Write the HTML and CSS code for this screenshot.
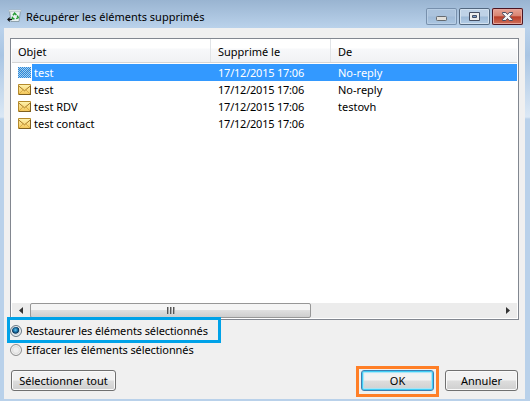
FILE: index.html
```
<!DOCTYPE html>
<html lang="fr">
<head>
<meta charset="utf-8">
<title>Récupérer les éléments supprimés</title>
<link rel="stylesheet" href="styles.css">
</head>
<body>
<svg class="defs" width="0" height="0" aria-hidden="true">
  <defs>
    <linearGradient id="paper" x2="0" y2="1"><stop stop-color="#fff4b0"/><stop offset="1" stop-color="#f3c557"/></linearGradient>
    <pattern id="dither" width="2" height="2" patternUnits="userSpaceOnUse"><path fill="#2a86dd" d="M0 0h1v1H0zM1 1h1v1H1z"/></pattern>
    <symbol id="mail" viewBox="0 0 13 11">
      <path fill="url(#paper)" stroke="#b58a2c" d="M.5.5h12v10H.5z"/>
      <path fill="none" stroke="#a87a25" d="M1 2.2l5.5 4.6L12 2.2"/>
      <path fill="none" stroke="#d3a23e" stroke-width=".8" d="M1 10l4-4M12 10L8 6"/>
      <path fill="none" stroke="#80601f" d="M1 10.500h12M12.500 2v9"/>
    </symbol>
  </defs>
</svg>
<div class="window">
  <header class="titlebar">
    <svg class="bin" width="15" height="14" viewBox="0 0 15 14">
      <path fill="#e9f1f3" stroke="#7e929c" stroke-width=".8" d="M2.500 1.500h11L12 12.500H4z"/>
      <path fill="#fff" stroke="#a9b7be" stroke-width=".7" d="M2 1h12v1.600H2z"/>
      <path fill="none" stroke="#249a30" stroke-width="1.500" d="M6 6.200l1.600-2 1.800 1.800M10.300 6.500l.9 2.200-2 .9M7.500 9.700H5.200l.5-2"/>
      <path fill="none" stroke="#111" stroke-width="1.200" d="M5 10.500H1M2.800 8.600L.9 10.500l1.900 1.900"/>
    </svg>
    <h1 class="title">Récupérer les éléments supprimés</h1>
    <div class="controls">
      <span class="control faded"><svg width="31" height="17"><rect x="10.5" y="8.5" width="10" height="4" rx=".8" fill="#e2e0db" stroke="#646a70"/></svg></span>
      <span class="control"><svg width="31" height="17"><path fill="#eee" fill-rule="evenodd" stroke="#454d61" d="M10.500 4.500h10v8h-10zM13.500 7.500v2h4v-2z"/><path fill="#7c9fcf" d="M14 8h3v1h-3z"/></svg></span>
      <span class="control close"><svg width="31" height="17"><path fill="#f4f2f2" stroke="#484c60" d="M10.500 4.500h3.300l1.700 2 1.700-2h3.300v1.200l-2.700 2.800 2.700 2.800v1.200h-3.300l-1.700-2-1.700 2h-3.300v-1.200l2.700-2.800-2.700-2.800z"/></svg></span>
    </div>
  </header>
  <main class="client">
    <section class="list">
      <div class="row head"><span class="cell first">Objet</span><span class="cell date">Supprimé le</span><span class="cell from">De</span></div>
      <div class="row selected"><svg width="13" height="11"><rect width="13" height="11" fill="#a8d3ee"/><path fill="none" stroke="#8fb9cc" d="M1 2.200l5.500 4.600L12 2.200"/><rect width="13" height="11" fill="url(#dither)"/></svg><span class="name">test</span><span class="when">17/12/2015 17:06</span><span class="who">No-reply</span></div>
      <div class="row"><svg width="13" height="11"><use href="#mail"/></svg><span class="name">test</span><span class="when">17/12/2015 17:06</span><span class="who">No-reply</span></div>
      <div class="row"><svg width="13" height="11"><use href="#mail"/></svg><span class="name">test RDV</span><span class="when">17/12/2015 17:06</span><span class="who">testovh</span></div>
      <div class="row"><svg width="13" height="11"><use href="#mail"/></svg><span class="name">test contact</span><span class="when">17/12/2015 17:06</span><span class="who"></span></div>
      <div class="scrollbar">
        <svg width="18" height="15"><path fill="#333" d="M7 7.500l4-3.500v7z"/></svg>
        <div class="thumb"><i></i><i></i><i></i></div>
        <svg class="right" width="18" height="15"><path fill="#333" d="M11 7.500L7 4v7z"/></svg>
      </div>
    </section>
    <div class="option marked"><span class="radio on"></span><span class="label">Restaurer les éléments sélectionnés</span></div>
    <div class="option"><span class="radio"></span><span class="label">Effacer les éléments sélectionnés</span></div>
    <footer class="actions">
      <button class="button all">Sélectionner tout</button>
      <div class="mark"><button class="button ok">OK</button></div>
      <button class="button cancel">Annuler</button>
    </footer>
  </main>
</div>
</body>
</html>
```
FILE: styles.css
```
* { box-sizing: border-box; }
body { margin: 0; font: 11px/17px "Noto Sans", "Open Sans", sans-serif; color: #000; }
.defs { position: absolute; }
svg { display: block; flex: none; }
.window { width: 530px; height: 401px; padding: 0 5px 2px 4px; background: linear-gradient(#99b4d1, #bad2eb 28px, #a9c5e3 55px, #dbe8f5 117px, #b9d1ea 119px); overflow: hidden; }
.titlebar { height: 28px; display: flex; align-items: flex-start; }
.bin { margin: 9px 0 0 3px; }
.title { margin: 8px 0 0 4px; font-size: 11px; line-height: 17px; font-weight: 400; white-space: nowrap; }
.controls { margin: 8px 2px 0 auto; display: flex; gap: 2px; }
.control { width: 31px; height: 17px; border-radius: 2px; box-shadow: inset 0 0 0 1px #52677f, inset 0 0 0 2px #d2e1f0; background: linear-gradient(#bfd2e7 48%, #9db9d7 52%, #b7d0e9); }
.faded { box-shadow: inset 0 0 0 1px #7790ad, inset 0 0 0 2px #b8cee5; background: linear-gradient(#abc3dd 48%, #9fbad7 52%, #adc8e3); }
.close { box-shadow: inset 0 0 0 1px #4b1522, inset 0 0 0 2px #e7a59b; background: linear-gradient(#e9a799, #d98471 46%, #b93c26 52%, #d27763); }
.client { height: 371px; padding: 10px 7px 0 6px; background: #f0f0f0; }
.list { height: 282px; width: 509px; border: 1px solid #828790; background: #fff; display: flex; flex-direction: column; padding: 0 1px 1px; }
.row { height: 17px; flex: none; display: flex; align-items: center; white-space: nowrap; padding-left: 6px; }
.row.head { height: 24px; margin-bottom: 1px; padding: 0 0 0 6px; border-bottom: 1px solid #d5d5d5; background: linear-gradient(#fff 9px, #f7f8fa 10px, #f1f2f4); }
.cell { height: 23px; line-height: 25px; }
.first { width: 193px; border-right: 1px solid #e1e4e7; }
.date { width: 120px; padding-left: 7px; border-right: 1px solid #e1e4e7; }
.from { padding-left: 7px; }
.row.selected { color: #fff; background: linear-gradient(90deg, #fff 20px, #3399ff 20px); }
.name { width: 184px; padding-left: 3px; }
.when { width: 120px; padding-left: 3px; letter-spacing: -.22px; }
.who { padding-left: 3px; }
.scrollbar { height: 15px; margin-top: auto; display: flex; background: #ececec; }
.thumb { width: 281px; height: 15px; border: 1px solid #979797; border-radius: 2px; background: linear-gradient(#f5f5f5 45%, #dfdfdf 50%, #cecece); display: flex; justify-content: center; align-items: center; gap: 1px; }
.thumb i { width: 2px; height: 7px; background: linear-gradient(90deg, #555 1px, #aaa 1px); }
.right { margin-left: auto; }
.option { height: 15px; margin-top: 2px; display: flex; align-items: center; gap: 4px; white-space: nowrap; }
.option.marked { width: 214px; height: 26px; margin: -3px 0 -3px -3px; border: 3px solid #00a2e8; padding-top: 1px; position: relative; }
.option:not(.marked) { margin-top: 2px; margin-bottom: 9px; }
.label { letter-spacing: -.1px; }
.radio { width: 12px; height: 12px; border: 1px solid #8e8f8f; border-radius: 50%; background: radial-gradient(#eee 30%, #d0d0d0 70%); box-shadow: inset 0 0 0 1px #f6f6f6; flex: none; }
.on { background: radial-gradient(circle at 45% 40%, #61c8ef 0, #15649a 28%, #0b3658 40%, #cbd6de 50%); border-color: #6c7b86; }
.actions { display: flex; align-items: flex-start; padding-left: 1px; }
.button { height: 21px; padding: 0; border: 1px solid #707070; border-radius: 3px; background: linear-gradient(#f2f2f2 48%, #dddddd 52%, #cfcfcf); box-shadow: inset 0 0 0 1px #fafafa; font: inherit; line-height: 18px; color: #000; white-space: nowrap; }
.all { width: 105px; margin-top: 4px; }
.mark { width: 83px; height: 31px; margin: 0 6px 0 240px; border: 3px solid #ff7f27; padding: 1px 2px; }
.ok { display: block; width: 73px; border-color: #3c7fb1; box-shadow: inset 0 0 0 1px #40cdf5, inset 0 0 1px 2px #a5e5f8; }
.cancel { width: 73px; margin-top: 4px; }
```
